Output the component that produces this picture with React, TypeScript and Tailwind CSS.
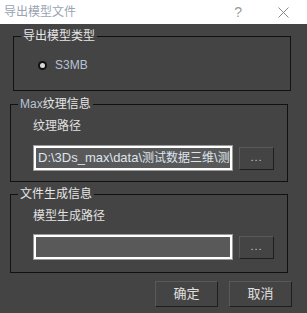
import { useState } from "react"

const font = { fontFamily: '"Liberation Sans", "Noto Sans CJK SC", sans-serif' }

function Browse() {
  return (
    <button className="w-[35px] h-[23px] shrink-0 mt-[2px] bg-[#444444] border border-t-[#5a5a5a] border-l-[#5a5a5a] border-r-[#1e1e1e] border-b-[#1e1e1e] flex items-center justify-center pb-[2px]">
      <span className="text-[11px] leading-none text-[#c9d2cf] tracking-[1px]">...</span>
    </button>
  )
}

function PathInput({ children }: { children?: React.ReactNode }) {
  return (
    <div className="w-[200px] h-[26px] border border-[#9a9a9a] shrink-0">
      <div className="w-full h-full border-2 border-white bg-[#595959] overflow-hidden whitespace-nowrap pl-[2px] text-[13px] leading-[20px] text-[#dde4ee]">
        {children}
      </div>
    </div>
  )
}

export default function App() {
  const [type, setType] = useState("S3MB")
  return (
    <div className="w-[307px] h-[313px] bg-[#444444] text-[12px]" style={font}>
      {/* 标题栏 */}
      <div className="h-[24px] bg-white flex items-center">
        <span className="ml-[4px] text-[12px] text-[#9aa3b3]">导出模型文件</span>
        <span className="ml-auto mr-[36px] text-[14px] text-[#9a9a9a]">?</span>
        <svg width="11" height="11" viewBox="0 0 11 11" className="mr-[18px]">
          <path d="M0.5 0.5 L10.5 10.5 M10.5 0.5 L0.5 10.5" stroke="#8a8a8a" strokeWidth="1" />
        </svg>
      </div>

      {/* 导出模型类型 */}
      <fieldset className="mt-[4px] ml-[13px] w-[278px] h-[63px] border border-[#111111] px-[7px]">
        <legend className="px-[2px] text-[#e6e6e6] leading-[16px]">导出模型类型</legend>
        <label className="flex items-center mt-[12px] ml-[17px] gap-[8px]" onClick={() => setType("S3MB")}>
          <span className="w-[9px] h-[9px] rounded-full bg-[#111] flex items-center justify-center">
            {type === "S3MB" && <span className="w-[5px] h-[5px] rounded-full bg-[#d8d8d8]" />}
          </span>
          <span className="text-[#b8c2d4] text-[12px]">S3MB</span>
        </label>
      </fieldset>

      {/* Max纹理信息 */}
      <fieldset className="mt-[5px] ml-[10px] w-[278px] h-[86px] border border-[#111111] px-[7px]">
        <legend className="px-[2px] text-[#e6e6e6] leading-[16px]">
          <span className="text-[#b8c2d4]">Max</span>纹理信息
        </legend>
        <div className="ml-[15px] mt-[6px] text-[#e0e0e0] leading-[16px]">纹理路径</div>
        <div className="ml-[15px] mt-[11px] flex gap-[6px]">
          <PathInput>
            {"D:\\3Ds_max\\data\\"}
            <span className="text-[12px]">测试数据三维</span>
            {"\\"}
            <span className="text-[12px]">测试数</span>
          </PathInput>
          <Browse />
        </div>
      </fieldset>

      {/* 文件生成信息 */}
      <fieldset className="mt-[4px] ml-[10px] w-[278px] h-[87px] border border-[#111111] px-[7px]">
        <legend className="px-[2px] text-[#e6e6e6] leading-[16px]">文件生成信息</legend>
        <div className="ml-[15px] mt-[6px] text-[#e0e0e0] leading-[16px]">模型生成路径</div>
        <div className="ml-[15px] mt-[10px] flex gap-[6px]">
          <PathInput />
          <Browse />
        </div>
      </fieldset>

      {/* 按钮 */}
      <div className="flex justify-end gap-[11px] mt-[8px] mr-[15px]">
        <button className="w-[63px] h-[26px] bg-[#444444] border border-t-[#5a5a5a] border-l-[#5a5a5a] border-r-[#1e1e1e] border-b-[#1e1e1e] text-[13px] text-[#e0e0e0]">
          确定
        </button>
        <button className="w-[63px] h-[26px] bg-[#444444] border border-t-[#5a5a5a] border-l-[#5a5a5a] border-r-[#1e1e1e] border-b-[#1e1e1e] text-[13px] text-[#e0e0e0]">
          取消
        </button>
      </div>
    </div>
  )
}
